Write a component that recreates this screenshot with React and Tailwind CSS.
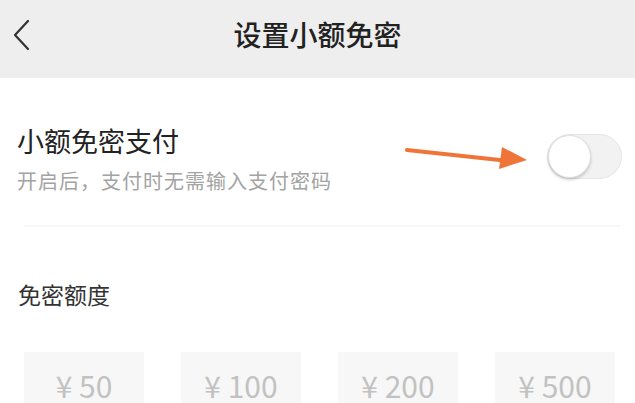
import React from 'react';

const amounts = ['50', '100', '200', '500'];

export default function App() {
  return (
    <div className="w-[635px] h-[403px] overflow-hidden bg-white" style={{ fontFamily: '"Noto Sans CJK SC", "Noto Sans", sans-serif' }}>
      {/* header */}
      <div className="h-[78px] bg-[#eeeeee] flex items-start relative">
        <div className="absolute left-[12px] top-[19px]">
          <svg width="20" height="32" viewBox="0 0 20 32" fill="none">
            <path d="M16 2 L3 16 L16 30" stroke="#333" strokeWidth="2.2" strokeLinecap="round" strokeLinejoin="round" />
          </svg>
        </div>
        <div className="w-full text-center text-[28px] leading-[28px] mt-[20px] font-medium text-[#222]">设置小额免密</div>
      </div>

      {/* switch row */}
      <div className="flex items-start justify-between pl-[17px] pr-[13px] pt-[48px]">
        <div>
          <div className="text-[27px] leading-[30px] text-[#222]">小额免密支付</div>
          <div className="text-[20px] leading-[22px] tracking-[1px] text-[#a3a3a3] mt-[14px]">开启后，支付时无需输入支付密码</div>
        </div>
        <div className="flex items-center mt-[8px]">
          <svg width="124" height="26" viewBox="0 0 124 26" className="mr-[18px]">
            <path d="M2 6 L104 17" stroke="#ef7438" strokeWidth="4" strokeLinecap="round" />
            <path d="M97 3 L122 16 L94 25 Z" fill="#ef7438" />
          </svg>
          <div className="w-[75px] h-[45px] rounded-full bg-[#f2f2f2] border border-[#e6e6e6] relative">
            <div className="absolute left-0 top-0 w-[43px] h-[43px] rounded-full bg-white border border-[#dedede] shadow-[0_2px_3px_rgba(0,0,0,0.18)]" />
          </div>
        </div>
      </div>

      <div className="ml-[24px] mr-[15px] mt-[33px] h-[2px] bg-[#f6f6f6]" />

      <div className="pl-[18px] mt-[55px] text-[23px] leading-[24px] text-[#333]">免密额度</div>

      <div className="flex gap-[37px] pl-[24px] mt-[46px]">
        {amounts.map(a => (
          <div key={a} className="w-[120px] h-[60px] bg-[#f7f7f7] flex justify-center pt-[16px]">
            <span className="text-[30px] leading-[34px] text-[#c2c2c2]">¥ {a}</span>
          </div>
        ))}
      </div>
    </div>
  );
}
